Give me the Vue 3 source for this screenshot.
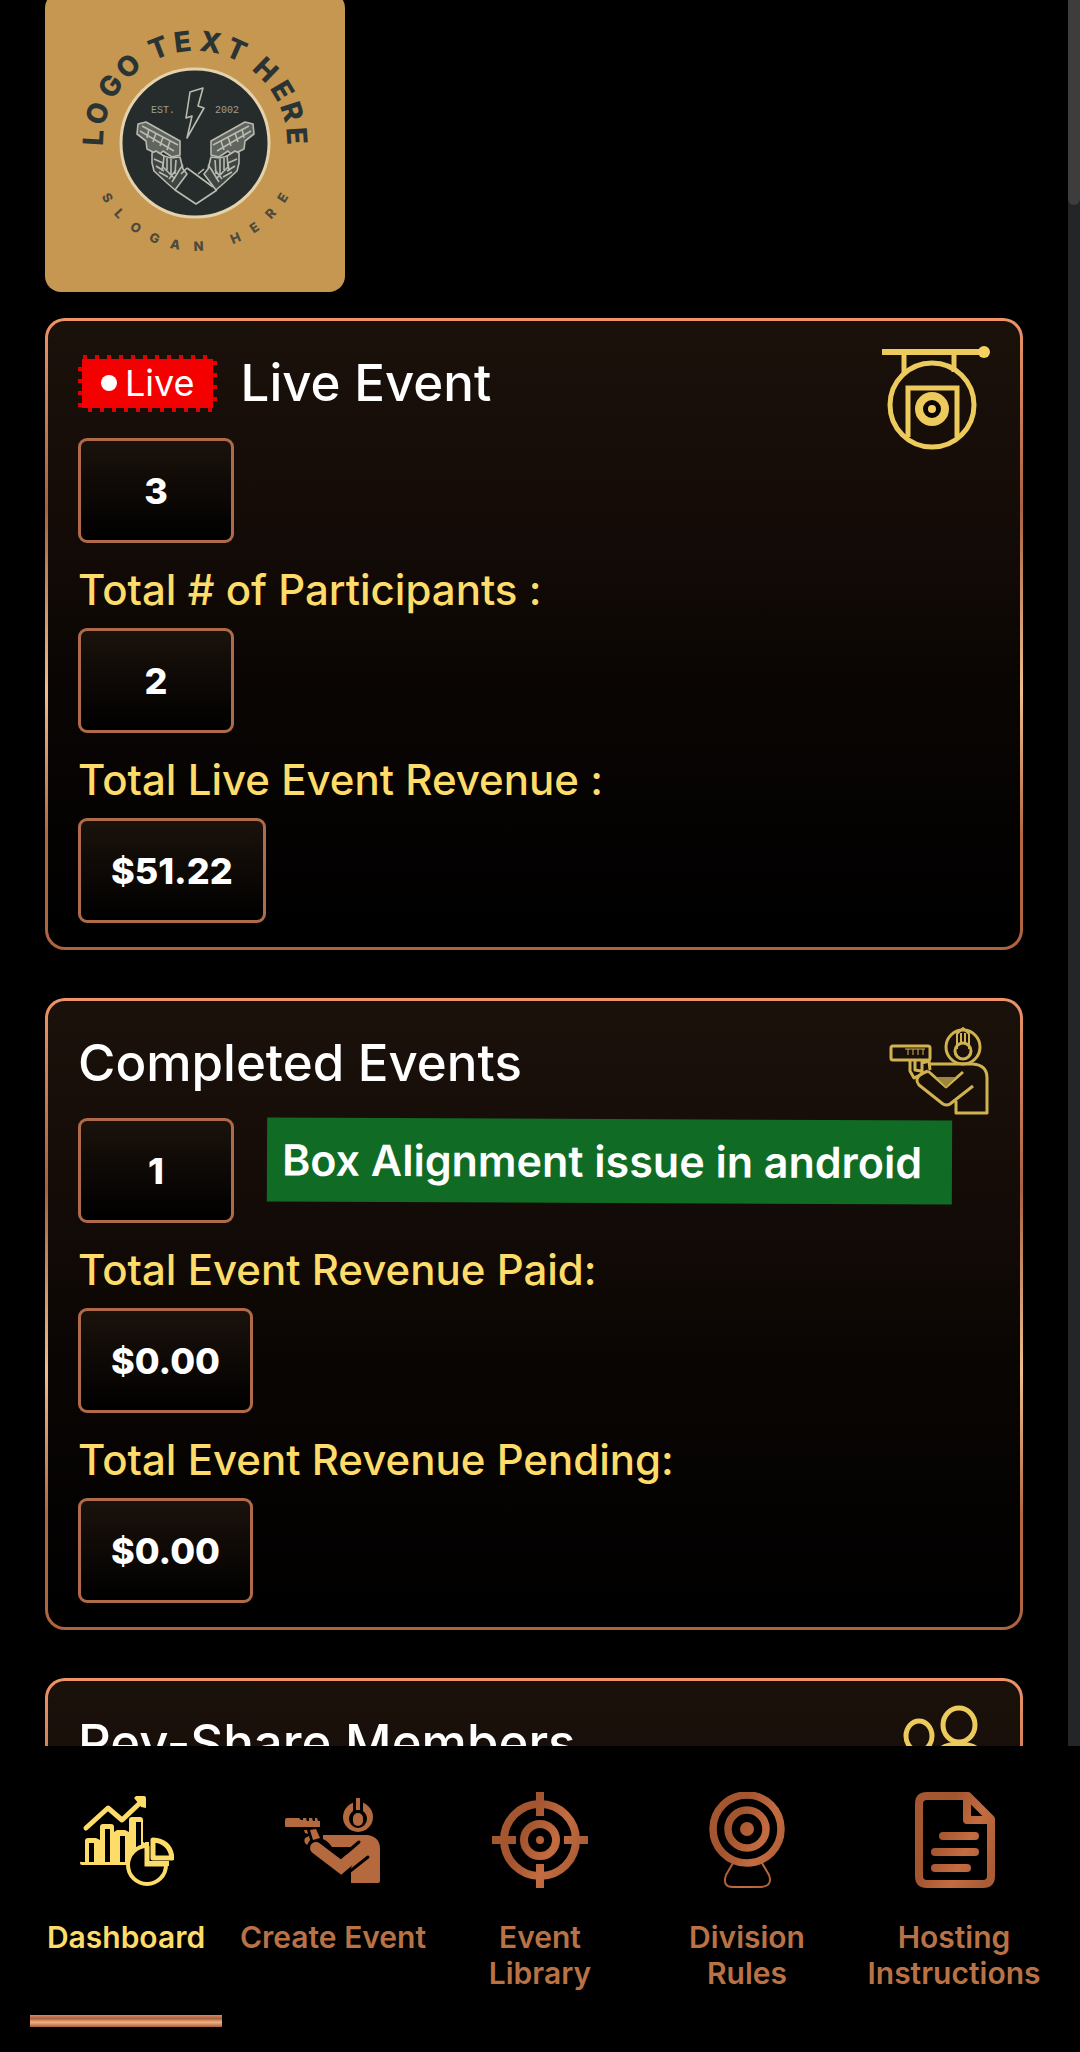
<template>
  <div class="app">
    <div class="viewport">
      <main class="content">
        <!-- club logo -->
        <svg class="logo" viewBox="0 0 300 300" role="img" aria-label="Logo">
          <rect width="300" height="300" fill="#c59750" />
          <circle cx="150" cy="151" r="74" fill="#262c2b" stroke="#e3d2ac" stroke-width="3" />
          <g class="ring-title">
            <text v-for="(item, i) in ringTitle" :key="i" x="150" y="59" :transform="`rotate(${item.angle} 150 151)`">{{ item.char }}</text>
          </g>
          <g class="ring-slogan">
            <text v-for="(item, i) in ringSlogan" :key="i" x="150" y="259" :transform="`rotate(${item.angle} 150 151)`">{{ item.char }}</text>
          </g>
          <text class="est" x="118" y="121">EST.</text>
          <text class="est" x="182" y="121">2002</text>
          <g fill="none" stroke="#b9bab0" stroke-width="1.6" stroke-linejoin="round">
            <path d="M145 100l13-4-5 18 6 2-17 30 5-22-6 2z" />
            <g v-for="side in ['', 'translate(301 0) scale(-1 1)']" :key="side" :transform="side">
              <path d="M93 132l8-2 34 19v14l-8 2-9-6-4 4-12-6-1-8-9-7z" fill="#5f645e" />
              <path d="M97 134l36 19M95 139l34 20M104 137l-2 9M111 141l-3 9M118 145l-3 9M125 149l-3 9" />
              <path d="M107 161l4-2 8 5 7 2 9-1 3 12 4 5-12 16-8-7-13-12-2-8z" fill="#3f4542" />
              <path d="M109 167l9 4-1 8M111 174l8 5M114 180l9 5M119 163l-1 12 12 12M126 167v16M131 168l-1 14M122 166v12M127 190l8-13 3-4M124 187l7-9" />
            </g>
            <path d="M130 198l21 14 21-14M142 176l26 19M159 177l-6 5M136 182l6-6" />
          </g>
        </svg>

        <section v-for="card in cards" :key="card.title" class="card">
          <div class="card-body">
            <header class="card-header">
              <span v-if="card.live" class="live"><i class="live-dot"></i>Live</span>
              <h2 class="card-title">{{ card.title }}</h2>
            </header>
            <template v-for="(row, i) in card.rows" :key="i">
              <p v-if="row.label" class="label">{{ row.label }}</p>
              <div class="value">{{ row.value }}</div>
            </template>
          </div>

          <svg v-if="card.icon === 'target'" class="card-icon" viewBox="0 0 108 108" aria-hidden="true">
            <g fill="none" stroke="#ecca5c" stroke-width="5">
              <path d="M0 7h101" stroke-width="6" />
              <path d="M22 9v20M72 9v18" />
              <circle cx="50" cy="60" r="42" />
              <path d="M26 92V43h49v49" />
              <circle cx="50" cy="64" r="13" fill="#090503" stroke-width="8" />
            </g>
            <circle cx="102" cy="7" r="6" fill="#f3d25f" />
            <circle cx="50" cy="64" r="4" fill="#f3d25f" />
          </svg>

          <svg v-if="card.icon === 'shooter'" class="card-icon" viewBox="-6 0 108 108" aria-hidden="true">
            <g fill="none" stroke="#d0b350" stroke-width="3" stroke-linejoin="round">
              <circle cx="75" cy="22" r="17" />
              <circle cx="75" cy="26" r="8" />
              <path d="M69 24V9l6-6 6 6v15M73 8v11M77 8v11" stroke-width="2" />
              <rect x="3" y="21" width="39" height="14" rx="2" />
              <path d="M17 24h20M20 24v6M25 24v6M30 24v6M35 24v6" stroke-width="1" />
              <path d="M22 36v10l4 7 8-4V36M27 36v9l6 1M34 38l7-2 1 9" />
              <path d="M42 39h43q14 1 14 14v35H68V76" />
              <path d="M40 46l18 16 17-15M85 61L62 79q-3 2-7 0L31 60q-5-6 2-11l7-3" />
              <path d="M48 52h20l-10 10z" fill="#9d873c" stroke="none" />
            </g>
          </svg>

          <svg v-if="card.icon === 'members'" class="card-icon" viewBox="0 0 108 108" aria-hidden="true">
            <g fill="none" stroke="#ecca5c" stroke-width="5">
              <ellipse cx="37" cy="31" rx="13" ry="15" />
              <ellipse cx="77" cy="20" rx="16" ry="17" />
              <path d="M52 92V62q0-23 25-23t25 23v30z" />
              <path d="M46 84H14V66q0-19 23-19" />
            </g>
          </svg>

          <div v-if="card.note" class="note">{{ card.note }}</div>
        </section>
      </main>
      <div class="scrollbar"><div class="thumb"></div></div>
    </div>

    <nav class="tabs">
      <a v-for="tab in tabs" :key="tab.id" href="#" class="tab" :class="{ active: tab.id === current }" @click.prevent="current = tab.id">
        <svg v-if="tab.id === 'dashboard'" class="tab-icon" viewBox="0 0 96 96" aria-hidden="true">
          <path d="M8 36l22-20 14 12L63 10" fill="none" stroke="#fddc6a" stroke-width="5" stroke-linecap="round" stroke-linejoin="round" />
          <path d="M58 4h8q2 0 2 2v10l-5-1-2-3-5-6z" fill="#fddc6a" />
          <path d="M4 70h3V49q0-3 3-3h8l4 2V35q0-3 3-3h8q3 0 3 3v5l3-2h8l4 2V28q0-3 3-3h8q3 0 3 3v22l6 3v20H4q-2 0-2-2t2-1z" fill="#fddc6a" />
          <path d="M11 51h5v19h-5zM27 37h5v33h-5zM42 44h5v26h-5zM58 30h5v23l-5 3z" fill="#000" />
          <circle cx="69" cy="73" r="19" fill="#000" stroke="#fddc6a" stroke-width="4" />
          <path d="M67 50v24h24V50z" fill="#fddc6a" />
          <path d="M71 44h28v25H71z" fill="#000" stroke="none" />
          <path d="M75 48q17 1 19 18H75z" fill="#000" stroke="#fddc6a" stroke-width="5" stroke-linejoin="round" />
          <path d="M69 54v18h19" fill="none" stroke="#fddc6a" stroke-width="5" />
        </svg>

        <svg v-if="tab.id === 'create'" class="tab-icon" viewBox="0 0 96 96" aria-hidden="true">
          <circle cx="73" cy="25" r="15" fill="#b4693f" />
          <path d="M68 5h10v14q4 3 4 8a9 9 0 0 1-18 0q0-5 4-8z" fill="#000" />
          <path d="M71 6h4v12h-4z" fill="#b4693f" />
          <rect x="68" y="21" width="10" height="13" rx="5" fill="#b4693f" />
          <path d="M2 26h12l2 2h2v-2h3l1 3h2v-3h3l1 3h2v-3h2l1 3h2v6H1q-1 0-1-1v-6q0-2 2-2z" fill="#b4693f" />
          <path d="M25 38l6-1 4 9-7 2zM19 38h3l1 4-3-1zM20 46l4-2 1 4-3 5q-4-3-2-7z" fill="#b4693f" />
          <path d="M38 43h45q12 2 12 14v32q0 2-2 2H66V76l9-20-11-1H47q-4-6-9-8z" fill="#b4693f" />
          <path d="M49 55h16l6 2-15 14z" fill="#000" />
          <path d="M31 56l25 19 20-17" fill="none" stroke="#b4693f" stroke-width="12" stroke-linecap="round" />
          <path d="M74 50L61 61M83 65L64 80v4" fill="none" stroke="#000" stroke-width="3" stroke-linecap="round" />
        </svg>

        <svg v-if="tab.id === 'library'" class="tab-icon" viewBox="0 0 96 96" aria-hidden="true">
          <defs>
            <linearGradient id="copper" gradientUnits="userSpaceOnUse" x1="8" y1="30" x2="90" y2="66">
              <stop offset="0" stop-color="#a45730" />
              <stop offset="0.3" stop-color="#a3552f" />
              <stop offset="0.65" stop-color="#c46c41" />
              <stop offset="1" stop-color="#a95c35" />
            </linearGradient>
          </defs>
          <g fill="none" stroke="url(#copper)" stroke-width="8">
            <circle cx="48" cy="48" r="36" />
            <circle cx="48" cy="48" r="16" />
          </g>
          <path d="M44 0h8v24h-8zM44 72h8v24h-8zM0 44h24v8H0zM72 44h24v8H72z" fill="url(#copper)" />
          <circle cx="48" cy="48" r="4" fill="url(#copper)" />
        </svg>

        <svg v-if="tab.id === 'rules'" class="tab-icon" viewBox="0 0 96 96" aria-hidden="true">
          <g fill="none" stroke="url(#copper)">
            <circle cx="48" cy="37" r="34" stroke-width="7.5" />
            <circle cx="48" cy="37" r="19" stroke-width="7.5" />
            <path d="M34 71l-7 12q-4 12 7 12h28q12-1 8-12l-7-12" stroke-width="2" />
          </g>
          <circle cx="48" cy="37" r="7" fill="url(#copper)" />
        </svg>

        <svg v-if="tab.id === 'hosting'" class="tab-icon" viewBox="0 0 96 96" aria-hidden="true">
          <g fill="none" stroke="url(#copper)" stroke-width="8" stroke-linejoin="round">
            <path d="M62 4H21q-8 0-8 8v72q0 8 8 8h56q8 0 8-8V27z" />
            <path d="M61 5v23h23" />
            <path d="M37 44h32M29 60h40M29 76h32" stroke-linecap="round" />
          </g>
        </svg>

        <span class="tab-label">{{ tab.label }}</span>
      </a>
    </nav>
  </div>
</template>

<script setup>
import { ref } from 'vue';

const current = ref('dashboard');

const tabs = [
  { id: 'dashboard', label: 'Dashboard' },
  { id: 'create', label: 'Create Event' },
  { id: 'library', label: 'Event Library' },
  { id: 'rules', label: 'Division Rules' },
  { id: 'hosting', label: 'Hosting Instructions' },
];

const cards = [
  {
    title: 'Live Event',
    live: true,
    icon: 'target',
    rows: [
      { value: '3' },
      { label: 'Total # of Participants :', value: '2' },
      { label: 'Total Live Event Revenue :', value: '$51.22' },
    ],
  },
  {
    title: 'Completed Events',
    icon: 'shooter',
    note: 'Box Alignment issue in android',
    rows: [
      { value: '1' },
      { label: 'Total Event Revenue Paid:', value: '$0.00' },
      { label: 'Total Event Revenue Pending:', value: '$0.00' },
    ],
  },
  {
    title: 'Rev-Share Members',
    icon: 'members',
    rows: [],
  },
];

// pair every letter with its angle on the logo ring
const onRing = (text, angles) =>
  [...text].map((char, i) => ({ char, angle: angles[i] }));

const ringTitle = onRing('LOGOTEXTHERE', [-87, -73, -56, -41, -21, -7, 9, 24, 44, 59, 72, 86]);
const ringSlogan = onRing('SLOGANHERE', [58, 47, 35, 23, 11, -2, -23, -35, -47, -58]);
</script>

<style>
body {
  background: #000;
}
</style>

<style scoped>
.app {
  display: flex;
  flex-direction: column;
  height: 100vh;
  background: #000;
  color: #fff;
  font-family: Inter, "Noto Sans", sans-serif;
}

.viewport {
  flex: 1;
  min-height: 0;
  display: flex;
  overflow: hidden;
}

.content {
  flex: 1;
  min-width: 0;
  /* the page is scrolled a little past its top */
  margin-top: -8px;
  padding: 0 45px;
}

.scrollbar {
  width: 12px;
  background: #242526;
}

.thumb {
  height: 205px;
  border-radius: 0 0 6px 6px;
  background: #3d3d3d;
}

.logo {
  display: block;
  width: 300px;
  height: 300px;
  margin-bottom: 26px;
  border-radius: 16px;
}

.ring-title text {
  font-size: 28px;
  font-weight: 800;
  fill: #2b3435;
  text-anchor: middle;
}

.ring-slogan text {
  font-size: 13px;
  font-weight: 800;
  fill: #4b4a3c;
  text-anchor: middle;
}

.est {
  font-family: "Liberation Mono", monospace;
  font-size: 10px;
  fill: #9c9f97;
  text-anchor: middle;
}

.card {
  position: relative;
  display: flex;
  align-items: flex-start;
  box-sizing: border-box;
  min-height: 632px;
  margin-bottom: 48px;
  padding: 24px 30px;
  border: 3px solid transparent;
  border-radius: 20px;
  background:
    linear-gradient(#1a110b, #150c08 30%, #090503 60%, #000) padding-box,
    linear-gradient(#ee9468, #a9623f 30%, #f0bd8c 59%, #b3683f 82%, #ad643f) border-box;
}

.card-body {
  flex: 1;
  padding-top: 8px;
}

.card-header {
  display: flex;
  align-items: center;
  gap: 24px;
  margin-bottom: 25px;
}

.card-title {
  margin: 0;
  font-size: 51px;
  font-weight: 500;
  line-height: 60px;
}

.live {
  --dash: #e00000 0 4px, transparent 4px 12px;
  display: flex;
  align-items: center;
  gap: 8px;
  box-sizing: border-box;
  height: 57px;
  padding: 0 18px 0 19px;
  border: 4px solid transparent;
  background:
    linear-gradient(#f40000, #f40000) padding-box,
    repeating-linear-gradient(90deg, var(--dash)) 5px 0 / 132px 4px no-repeat border-box,
    repeating-linear-gradient(90deg, var(--dash)) 10px 100% / 124px 4px no-repeat border-box,
    repeating-linear-gradient(var(--dash)) 0 12px / 4px 42px no-repeat border-box,
    repeating-linear-gradient(var(--dash)) 100% 6px / 4px 48px no-repeat border-box;
  font-size: 36px;
  line-height: 44px;
}

.live-dot {
  width: 16px;
  height: 16px;
  border-radius: 50%;
  background: #fff;
}

.label {
  margin: 0;
  padding: 22px 0 13px;
  color: #fddc6a;
  font-size: 42px;
  font-weight: 500;
  line-height: 50px;
}

.value {
  display: flex;
  align-items: center;
  justify-content: center;
  box-sizing: border-box;
  width: fit-content;
  min-width: 156px;
  height: 105px;
  padding: 0 30px;
  border: 3px solid #ae6a49;
  border-radius: 9px;
  background: linear-gradient(#1b120c, #000);
  font-size: 36px;
  font-weight: 800;
}

.card-icon {
  flex: none;
  width: 108px;
  height: 108px;
}

.note {
  position: absolute;
  top: 118px;
  left: 219px;
  padding: 15px 30px 15px 15px;
  background: #106c25;
  font-size: 43px;
  font-weight: 600;
  line-height: 54px;
  white-space: nowrap;
  transform: rotate(0.25deg);
}

.tabs {
  display: flex;
  gap: 15px;
  padding: 46px 30px 25px;
  background: #000;
}

.tab {
  flex: 1 1 0;
  min-width: 0;
  display: flex;
  flex-direction: column;
  align-items: center;
  color: #b97245;
  text-decoration: none;
}

.tab::after {
  content: "";
  width: 100%;
  height: 12px;
  margin-top: 24px;
}

.tab.active {
  color: #fddc6a;
}

.tab.active::after {
  background: linear-gradient(#d98a62, #a9623f 30%, #f3b184 60%, #a9623f);
}

.tab-icon {
  width: 96px;
  height: 96px;
  margin-bottom: 31px;
}

.tab-label {
  min-height: 72px;
  padding: 0 2px;
  font-size: 30px;
  font-weight: 600;
  line-height: 36px;
  text-align: center;
}
</style>
